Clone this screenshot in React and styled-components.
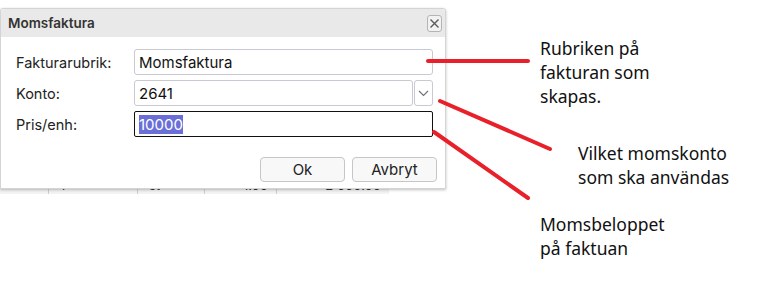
import React from 'react';
import styled, { createGlobalStyle } from 'styled-components';

const GlobalStyle = createGlobalStyle`
  html, body {
    margin: 0;
    padding: 0;
    background: #ffffff;
  }
  body {
    width: 760px;
    height: 304px;
    overflow: hidden;
  }
`;

const Page = styled.div`
  position: relative;
  display: flex;
  width: 760px;
  height: 304px;
  font-family: Inter, "Noto Sans", sans-serif;
`;

const LeftColumn = styled.div`
  display: flex;
  flex-direction: column;
  width: 446px;
  padding-top: 8px;
`;

const Dialog = styled.div`
  display: flex;
  flex-direction: column;
  box-sizing: border-box;
  width: 446px;
  height: 181px;
  background: #ffffff;
  border: 1px solid #d4d4d4;
  border-radius: 3px 3px 0 0;
  box-shadow: 0 1px 3px rgba(0, 0, 0, 0.25);
  position: relative;
  z-index: 1;
`;

const TitleBar = styled.div`
  display: flex;
  align-items: center;
  justify-content: space-between;
  height: 28px;
  padding: 0 3px 0 7px;
  background: #e9e9e9;
  border-radius: 3px 3px 0 0;
`;

const Title = styled.span`
  font-size: 13.5px;
  font-weight: 600;
  color: #333333;
`;

const CloseButton = styled.button`
  display: flex;
  align-items: center;
  justify-content: center;
  box-sizing: border-box;
  width: 15px;
  height: 17px;
  padding: 0;
  background: #f2f2f2;
  border: 1px solid #b4b4b4;
  border-radius: 3px;
`;

const Body = styled.div`
  display: flex;
  flex-direction: column;
  padding: 12px 12px 0 15px;
`;

const Form = styled.div`
  display: grid;
  grid-template-columns: 118px 1fr;
  row-gap: 5px;
  align-items: center;
`;

const Label = styled.label`
  font-size: 14.5px;
  color: #222222;
`;

const Field = styled.div`
  display: flex;
  align-items: center;
  box-sizing: border-box;
  height: 26px;
  padding: 0 4px;
  border: 1px solid ${p => (p.$focused ? '#111111' : '#c9c9d3')};
  border-radius: ${p => (p.$focused ? '2px' : '3px')};
  font-size: 15px;
  color: #111111;
  flex: 1;
`;

const SelectRow = styled.div`
  display: flex;
  gap: 1px;
`;

const DropButton = styled.div`
  display: flex;
  align-items: center;
  justify-content: center;
  box-sizing: border-box;
  width: 19px;
  height: 26px;
  border: 1px solid #c9c9d3;
  border-radius: 3px;
`;

const Selected = styled.span`
  background: #6a6fd8;
  color: #ffffff;
`;

const Buttons = styled.div`
  display: flex;
  justify-content: flex-end;
  gap: 7px;
  margin-top: 20px;
  margin-right: -4px;
`;

const Button = styled.button`
  box-sizing: border-box;
  width: 85px;
  height: 25px;
  background: #f8f8f8;
  border: 1px solid #c6c6c6;
  border-radius: 4px;
  font-family: Inter, "Noto Sans", sans-serif;
  font-size: 15px;
  color: #222222;
`;

const TableStrip = styled.div`
  height: 5px;
  overflow: hidden;
  background: #f3f3f3;
  width: 389px;
`;

const TableRow = styled.div`
  display: grid;
  grid-template-columns: 48px 89px 67px 72px 113px;
  margin-top: -13px;
  height: 18px;
  font-size: 13px;
  line-height: 18px;
  color: #333333;
`;

const Cell = styled.div`
  box-sizing: border-box;
  border-left: ${p => (p.$first ? 'none' : '1px solid #cfcfcf')};
  text-align: ${p => p.$align || 'left'};
  padding: ${p => (p.$align === 'right' ? '0 8px 0 0' : '0 0 0 11px')};
`;

const Notes = styled.div`
  display: flex;
  flex-direction: column;
  padding-top: 36px;
  padding-left: 94px;
`;

const Note = styled.p`
  margin: 0;
  margin-left: ${p => p.$indent || 0}px;
  margin-top: ${p => p.$top || 0}px;
  font-family: "Noto Sans", sans-serif;
  font-size: 17.5px;
  line-height: 24px;
  color: #111111;
`;

const Arrows = styled.svg`
  position: absolute;
  left: 0;
  top: 0;
  pointer-events: none;
  z-index: 2;
`;

export default function App() {
  return (
    <>
      <GlobalStyle />
      <Page>
        <LeftColumn>
          <Dialog>
            <TitleBar>
              <Title>Momsfaktura</Title>
              <CloseButton aria-label="Stäng">
                <svg width="11" height="11" viewBox="0 0 11 11">
                  <path d="M1.5 1.5 L9.5 9.5 M9.5 1.5 L1.5 9.5" stroke="#5a5a5a" strokeWidth="1.4" />
                </svg>
              </CloseButton>
            </TitleBar>
            <Body>
              <Form>
                <Label>Fakturarubrik:</Label>
                <Field>Momsfaktura</Field>
                <Label>Konto:</Label>
                <SelectRow>
                  <Field>2641</Field>
                  <DropButton>
                    <svg width="11" height="7" viewBox="0 0 11 7">
                      <path d="M1 1 L5.5 5.5 L10 1" fill="none" stroke="#6b6f7a" strokeWidth="1.1" />
                    </svg>
                  </DropButton>
                </SelectRow>
                <Label>Pris/enh:</Label>
                <Field $focused>
                  <Selected>10000</Selected>
                </Field>
              </Form>
              <Buttons>
                <Button>Ok</Button>
                <Button>Avbryt</Button>
              </Buttons>
            </Body>
          </Dialog>
          <TableStrip>
            <TableRow>
              <Cell $first />
              <Cell>1</Cell>
              <Cell>st</Cell>
              <Cell $align="right">1.00</Cell>
              <Cell $align="right">2 000.00</Cell>
            </TableRow>
          </TableStrip>
        </LeftColumn>
        <Notes>
          <Note>Rubriken på<br />fakturan som<br />skapas.</Note>
          <Note $indent={38} $top={33}>Vilket momskonto<br />som ska användas</Note>
          <Note $top={23}>Momsbeloppet<br />på faktuan</Note>
        </Notes>
        <Arrows width="760" height="304" viewBox="0 0 760 304">
          <g stroke="#e8202a" strokeWidth="4" strokeLinecap="round">
            <line x1="428" y1="61" x2="528" y2="61" />
            <line x1="440" y1="101" x2="550" y2="149" />
            <line x1="434" y1="132" x2="528" y2="198" />
          </g>
        </Arrows>
      </Page>
    </>
  );
}
